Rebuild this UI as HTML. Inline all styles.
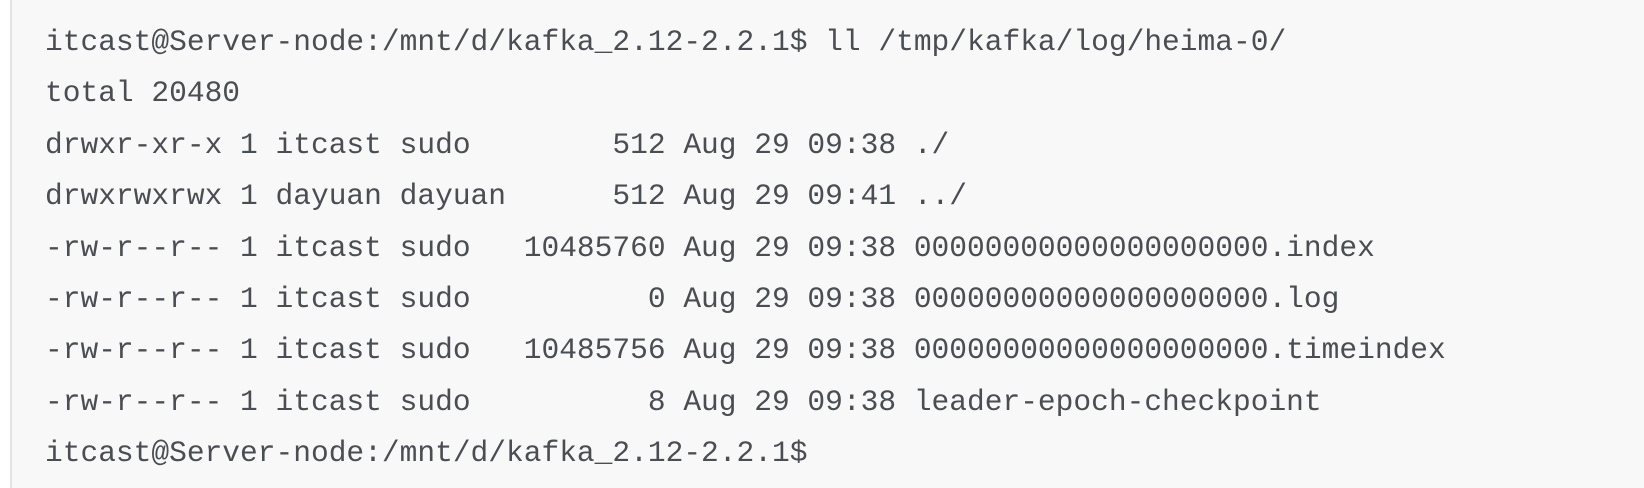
<!DOCTYPE html>
<html><head><meta charset="utf-8"><style>
html,body{margin:0;padding:0;background:#fff;}
.box{position:absolute;left:10px;top:0;width:1640px;height:488px;background:#f7f8f7;border-left:2px solid #e2e4e2;box-sizing:border-box;}
pre{margin:0;position:absolute;left:45px;top:17px;font-family:"Liberation Mono",monospace;font-size:29.55px;line-height:51.4px;color:#4a4d52;white-space:pre;}
</style></head><body>
<div class="box"></div>
<pre>itcast@Server-node:/mnt/d/kafka_2.12-2.2.1$ ll /tmp/kafka/log/heima-0/
total 20480
drwxr-xr-x 1 itcast sudo        512 Aug 29 09:38 ./
drwxrwxrwx 1 dayuan dayuan      512 Aug 29 09:41 ../
-rw-r--r-- 1 itcast sudo   10485760 Aug 29 09:38 00000000000000000000.index
-rw-r--r-- 1 itcast sudo          0 Aug 29 09:38 00000000000000000000.log
-rw-r--r-- 1 itcast sudo   10485756 Aug 29 09:38 00000000000000000000.timeindex
-rw-r--r-- 1 itcast sudo          8 Aug 29 09:38 leader-epoch-checkpoint
itcast@Server-node:/mnt/d/kafka_2.12-2.2.1$</pre>
</body></html>
